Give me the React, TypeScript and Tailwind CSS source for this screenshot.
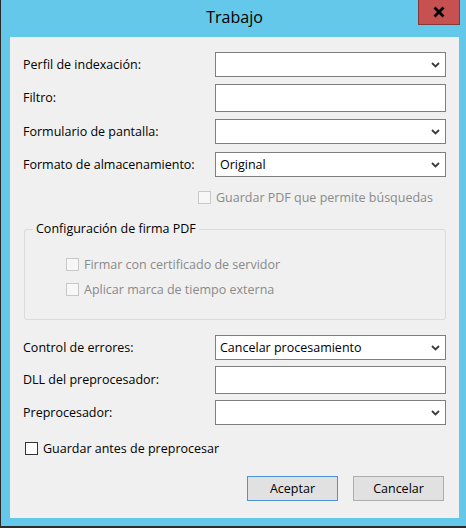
import React from "react";

const Chevron = () => (
  <svg width="9" height="6" viewBox="0 0 9 6" className="shrink-0">
    <path d="M1 1L4.5 4.5L8 1" fill="none" stroke="#3c3c3c" strokeWidth="1.8" />
  </svg>
);

const Combo = ({ value = "" }: { value?: string }) => (
  <div className="h-[25px] w-[231px] border border-[#7f7f7f] bg-white flex items-center justify-between pl-[4px] pr-[5px]">
    <span className="text-black">{value}</span>
    <Chevron />
  </div>
);

const TextBox = () => <div className="h-[28px] w-[231px] border border-[#7f7f7f] bg-white" />;

const Check = ({ disabled = false }: { disabled?: boolean }) => (
  <span
    className={
      disabled
        ? "block w-[13px] h-[13px] border border-[#c8c8c8] bg-[#f7f7f7] shrink-0"
        : "block w-[13px] h-[13px] border border-[#333333] bg-white shrink-0"
    }
  />
);

const Row = ({ label, children, mt }: { label: string; children: React.ReactNode; mt: string }) => (
  <div className={`flex items-center ${mt}`}>
    <div className="w-[192px] text-black">{label}</div>
    {children}
  </div>
);

export default function App() {
  return (
    <div className="w-[466px] h-[529px] bg-white overflow-hidden font-['Open_Sans',sans-serif] text-[12.5px] leading-[16px]">
      <div className="relative w-[466px] h-[528px] border-l border-b-2 border-[#2b2b2b] bg-[#63c8e9] flex flex-col">
        <div className="h-[37px] shrink-0 flex justify-center pt-[6px] pl-[9px] pr-[7px]">
          <span className="text-[16px] leading-[22px] text-black">Trabajo</span>
        </div>
        <div className="absolute left-[417px] top-0 w-[42px] h-[25px] bg-[#c75050] border-l border-b border-r border-[#843838] flex items-center justify-center">
          <svg width="14" height="12" viewBox="0 0 14 12">
            <path d="M2.5 1.5L11.5 10.5M11.5 1.5L2.5 10.5" stroke="#000" strokeWidth="2.8" fill="none" />
          </svg>
        </div>
        <div className="ml-[9px] w-[449px] h-[481px] bg-[#f0f0f0] flex flex-col pl-[13px] pr-[13px]">
          <Row label="Perfil de indexación:" mt="mt-[15px]">
            <Combo />
          </Row>
          <Row label="Filtro:" mt="mt-[7px]">
            <TextBox />
          </Row>
          <Row label="Formulario de pantalla:" mt="mt-[7px]">
            <Combo />
          </Row>
          <Row label="Formato de almacenamiento:" mt="mt-[8px]">
            <Combo value="Original" />
          </Row>
          <div className="flex items-center h-[17px] mt-[12px] ml-[175px]">
            <Check disabled />
            <span className="ml-[5px] text-[#8a8a8a]">Guardar PDF que permite búsquedas</span>
          </div>
          <fieldset className="mt-[15px] ml-[1px] w-[422px] h-[99px] border border-[#dadada] rounded-[3px] p-0 m-0">
            <legend className="ml-[8px] px-[3px] leading-[16px] text-black">Configuración de firma PDF</legend>
            <div className="flex items-center h-[17px] mt-[19px] ml-[41px]">
              <Check disabled />
              <span className="ml-[5px] text-[#8a8a8a]">Firmar con certificado de servidor</span>
            </div>
            <div className="flex items-center h-[17px] mt-[8px] ml-[41px]">
              <Check disabled />
              <span className="ml-[5px] text-[#8a8a8a]">Aplicar marca de tiempo externa</span>
            </div>
          </fieldset>
          <Row label="Control de errores:" mt="mt-[15px]">
            <Combo value="Cancelar procesamiento" />
          </Row>
          <Row label="DLL del preprocesador:" mt="mt-[6px]">
            <TextBox />
          </Row>
          <Row label="Preprocesador:" mt="mt-[6px]">
            <Combo />
          </Row>
          <div className="flex items-center h-[17px] mt-[15px] ml-[2px]">
            <Check />
            <span className="ml-[5px] text-black">Guardar antes de preprocesar</span>
          </div>
          <div className="flex justify-end gap-[15px] mt-[19px] mr-[2px]">
            <button className="w-[91px] h-[25px] bg-[#e1e1e1] border border-[#4d94d6] text-black">Aceptar</button>
            <button className="w-[91px] h-[25px] bg-[#e1e1e1] border border-[#adadad] text-black">Cancelar</button>
          </div>
        </div>
      </div>
    </div>
  );
}
